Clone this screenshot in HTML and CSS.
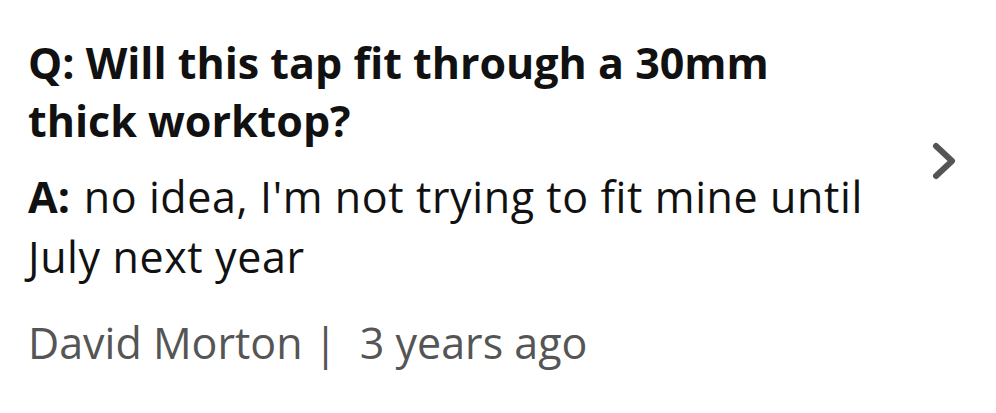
FILE: index.html
```html
<!DOCTYPE html>
<html>
<head>
<meta charset="utf-8">
<link rel="stylesheet" href="styles.css">
</head>
<body>
<div class="card">
  <div class="row">
    <div class="qa">
      <p class="q">Q: Will this tap fit through a 30mm thick worktop?</p>
      <p class="a"><b>A:</b> no idea, I'm not trying to fit mine until July next year</p>
    </div>
    <svg class="chev" width="28" height="40" viewBox="0 0 28 40"><path d="M6 5 L22 20 L6 35" fill="none" stroke="#555" stroke-width="6" stroke-linecap="round" stroke-linejoin="round"/></svg>
  </div>
  <div class="meta">David Morton |&nbsp; 3 years ago</div>
</div>
</body>
</html>
```
FILE: styles.css
```css
html, body { margin: 0; padding: 0; background: #fff; }
body { font-family: "Open Sans", sans-serif; color: #111; }
.card { padding: 34px 0 0 28px; width: 968px; box-sizing: border-box; }
.row { display: flex; align-items: center; }
.qa { width: 850px; }
.q { margin: 0; font-weight: 700; font-size: 43px; line-height: 58px; }
.a { margin: 17px 0 0; font-size: 43px; line-height: 60px; letter-spacing: 0.6px; }
.a b { font-weight: 700; letter-spacing: 0; margin-right: 2px; }
.chev { margin-left: 52px; }
.meta { margin-top: 26px; color: #555; font-size: 43px; line-height: 60px; }
```
